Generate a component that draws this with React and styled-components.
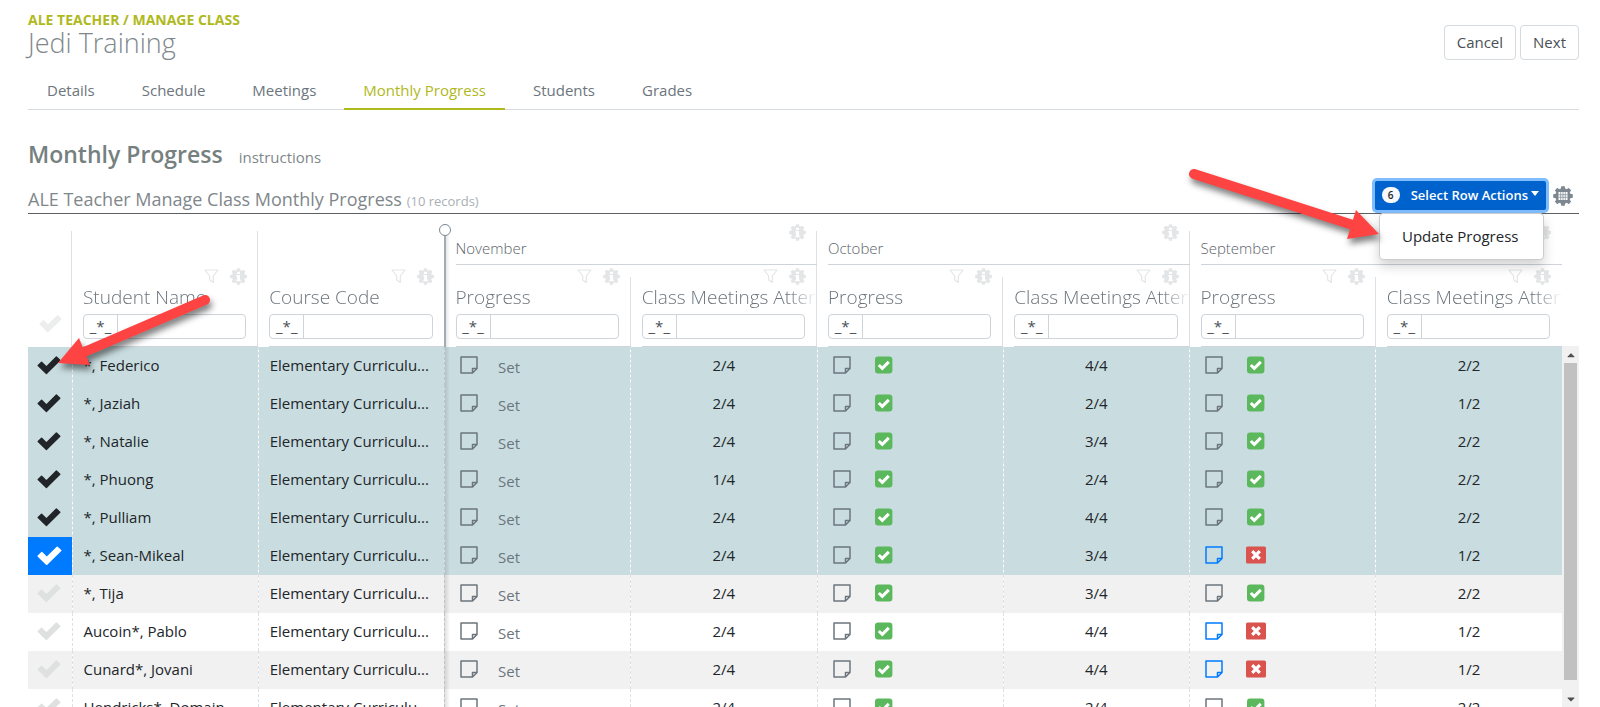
import styled, { createGlobalStyle } from 'styled-components';
import { FaCaretDown, FaCaretUp } from 'react-icons/fa';

const GlobalStyle = createGlobalStyle`
    * {
        box-sizing: border-box;
    }
    body {
        margin: 0;
        background-color: white;
        color: #212529;
        font-family: "Open Sans", "Noto Sans", sans-serif;
        font-size: 15px;
    }
    button, input {
        font-family: inherit;
    }
`;

const Container = styled.div`
    position: relative;
    display: flex;
    flex-direction: column;
    height: 100vh;
    padding: 10px 21px 0px 28px;
    overflow: hidden;
`;

const Header = styled.header`
    display: flex;
    align-items: flex-start;
    justify-content: space-between;
    height: 60px;
`;

const Breadcrumb = styled.div`
    font-size: 14px;
    font-weight: 700;
    line-height: 20px;
    color: #b0b91c;
`;

const ClassName = styled.h1`
    margin: 0px;
    font-size: 27px;
    font-weight: 300;
    line-height: 26px;
    color: #80878b;
`;

const HeaderButtons = styled.div`
    display: flex;
    gap: 4px;
    padding-top: 15px;
`;

const Button = styled.button`
    height: 35px;
    padding: 0px 12px 2px;
    border: 1px solid #d5dade;
    border-radius: 4px;
    background-color: white;
    font-size: 15px;
    color: #4a5056;
    cursor: pointer;
`;

const Tabs = styled.nav`
    display: flex;
    gap: 9px;
    border-bottom: 1px solid #d5dade;
`;

const Tab = styled.a`
    height: 40px;
    padding: 0px 19px;
    margin-bottom: -1px;
    border-bottom: 2px solid ${props => props.$active ? "#b0b91c" : "transparent"};
    font-size: 15px;
    line-height: 40px;
    color: ${props => props.$active ? "#b0b91c" : "#6c757d"};
    text-decoration: none;
`;

const Section = styled.div`
    display: flex;
    align-items: baseline;
    gap: 16px;
    padding-top: 28px;
`;

const SectionTitle = styled.h2`
    margin: 0px;
    font-size: 23px;
    font-weight: 600;
    line-height: 32px;
    color: #75807f;
`;

const Instructions = styled.a`
    font-size: 15px;
    color: #80878b;
    text-decoration: none;
`;

const GridBar = styled.div`
    display: flex;
    align-items: flex-end;
    justify-content: space-between;
    height: 44px;
    border-bottom: 1px solid #5c6064;
`;

const GridTitle = styled.h3`
    margin: 0px;
    font-size: 18px;
    font-weight: 400;
    line-height: 24px;
    color: #80878b;
`;

const Records = styled.small`
    font-size: 13px;
    color: #a9afb4;
`;

const Actions = styled.div`
    position: relative;
    display: flex;
    align-items: center;
    gap: 7px;
    padding: 0px 6px 3px 0px;
`;

const ActionButton = styled.button`
    display: flex;
    align-items: center;
    height: 29px;
    padding: 0px 7px 1px;
    border: none;
    border-radius: 2px;
    background-color: #0062cc;
    box-shadow: 0px 0px 0px 3px #80bdff;
    font-size: 13px;
    font-weight: 600;
    color: white;
    cursor: pointer;
`;

const Badge = styled.span`
    width: 18px;
    margin-right: 11px;
    border-radius: 8px;
    background-color: #f8f9fa;
    font-size: 10px;
    line-height: 16px;
    color: #212529;
    text-align: center;
`;

const Caret = styled.span`
    margin: -3px 0px 0px 3px;
    border-top: 5px solid white;
    border-left: 4px solid transparent;
    border-right: 4px solid transparent;
`;

const Menu = styled.div`
    position: absolute;
    top: 32px;
    right: 35px;
    z-index: 2;
    width: 165px;
    padding: 6px 0px 7px;
    border: 1px solid #cccccc;
    border-radius: 4px;
    background-color: white;
    box-shadow: 0px 6px 12px rgba(0, 0, 0, 0.18);
`;

const MenuItem = styled.button`
    width: 100%;
    padding: 0px 22px;
    border: none;
    background-color: transparent;
    font-size: 15px;
    line-height: 32px;
    color: #212529;
    text-align: left;
    white-space: nowrap;
`;

const Grid = styled.div`
    position: relative;
    display: flex;
    flex: 1;
    min-height: 0px;
`;

const TableArea = styled.div`
    position: relative;
    flex: 1;
    min-width: 0px;
    overflow: hidden;
`;

const Table = styled.table`
    width: 100%;
    border-collapse: collapse;
    table-layout: fixed;
`;

const Th = styled.th`
    padding: 0px;
    font-weight: 400;
    text-align: left;
    vertical-align: bottom;
`;

const HeadBox = styled.div`
    display: flex;
    flex-direction: column;
    justify-content: flex-end;
    height: ${props => props.$height}px;
    padding-left: 11px;
    background: linear-gradient(#dde1e5, #dde1e5) right bottom / 1px ${props => props.$line}px no-repeat;
`;

const HeadContent = styled.div`
    padding-bottom: 7px;
    border-bottom: 1px solid #ced4da;
`;

const Tools = styled.div`
    display: flex;
    justify-content: flex-end;
    align-items: center;
    gap: 11px;
    height: 18px;
    padding-right: 11px;
`;

const GroupContent = styled.div`
    height: 42px;
    border-bottom: 1px solid #ced4da;
`;

const GroupTitle = styled.div`
    font-size: 15px;
    font-weight: 300;
    line-height: 14px;
    color: #5c646b;
`;

const ColTitle = styled.div`
    height: 24px;
    margin-bottom: 5px;
    overflow: hidden;
    font-size: 19px;
    font-weight: 300;
    line-height: 24px;
    color: #6c757d;
    white-space: nowrap;
    mask-image: linear-gradient(to left, transparent 0px, black 28px);
`;

const Filter = styled.div`
    display: flex;
    height: 25px;
    margin-right: 12px;
    border: 1px solid #ced4da;
    border-radius: 4px;
`;

const FilterMode = styled.button`
    flex: none;
    width: 34px;
    padding: 0px;
    border: none;
    border-right: 1px solid #ced4da;
    background-color: transparent;
    font-size: 15px;
    line-height: 23px;
    color: #495057;
`;

const FilterInput = styled.input`
    flex: 1;
    min-width: 0px;
    border: none;
    background-color: transparent;
    outline: none;
`;

const HeadCheck = styled.div`
    padding: 0px 0px 12px;
    line-height: 0;
    color: #eceded;
`;

const Row = styled.tr`
    height: 38px;
    background-color: ${props => props.$selected ? "#c9dde0" : props.$odd ? "#f1f1f1" : "white"};
`;

const Td = styled.td`
    padding: 0px 11px 2px;
    border-right: 1px dashed #dde1e5;
    overflow: hidden;
    font-size: 15px;
    text-align: ${props => props.$center ? "center" : "left"};
    text-overflow: ellipsis;
    white-space: nowrap;

    &:last-child {
        border-right: none;
    }
`;

const CheckCell = styled(Td)`
    padding: 0px 0px 2px 9px;
    background-color: ${props => props.$current ? "#007bff" : "transparent"};
    line-height: 0;
    color: ${props => props.$current ? "white" : props.$selected ? "#212529" : "#dfe1e1"};
`;

const Progress = styled.div`
    display: flex;
    align-items: center;
    gap: ${props => props.$wide ? "23px" : "20px"};
    padding-left: 4px;
`;

const SetLink = styled.span`
    padding-top: 3px;
    color: #6c757d;
`;

const Splitter = styled.div`
    position: absolute;
    top: 10px;
    bottom: 0px;
    left: calc(44px + (100% - 44px) / 4 - 1px);
    width: 6px;
    background: linear-gradient(to right, rgba(0, 0, 0, 0.14), rgba(0, 0, 0, 0));
`;

const SplitterLine = styled.div`
    width: 2px;
    height: 123px;
    background-color: #a3acb5;
`;

const SplitterKnob = styled.div`
    position: absolute;
    top: 0px;
    left: -5px;
    width: 12px;
    height: 12px;
    border: 1px solid #7d8994;
    border-radius: 50%;
    background-color: white;
`;

const ScrollBar = styled.div`
    display: flex;
    flex-direction: column;
    align-items: center;
    flex: none;
    width: 17px;
    margin-top: 132px;
    background-color: #f1f1f1;
    font-size: 12px;
    color: #505050;
`;

const ScrollArrow = styled.div`
    display: flex;
    align-items: center;
    height: 17px;
`;

const Thumb = styled.div`
    flex: 1;
    width: 13px;
    margin-bottom: 10px;
    background-color: #c1c1c1;
`;

const Arrow = styled.svg`
    position: absolute;
    top: ${props => props.$top}px;
    left: ${props => props.$left};
    z-index: 3;
    filter: drop-shadow(2px 5px 3px rgba(0, 0, 0, 0.5));
    pointer-events: none;
`;

const teeth = [0, 45, 90, 135, 180, 225, 270, 315];

const GearShape = () => (
    <>
        <circle cx="10" cy="10" r="7.8"/>
        {teeth.map((deg) => (
            <rect key={deg} x="8" y="0.2" width="4" height="5" rx="0.8" transform={`rotate(${deg} 10 10)`}/>
        ))}
    </>
)

const InfoGear = () => (
    <svg width="17" height="17" viewBox="0 0 20 20" fill="#e3e5e7">
        <GearShape/>
        <path d="M8.200 4.500h3.600v2.600H8.200zM7.400 8.200h4.400v5.600h1v1.800H7.400v-1.800h1v-3.800h-1z" fill="white"/>
    </svg>
)

const GridGear = () => (
    <svg width="20" height="20" viewBox="0 0 20 20" fill="#7d8790">
        <GearShape/>
        <path d="M5.500 6h9v8h-9z" fill="white"/>
        <path d="M7.700 6v8M10 6v8M12.300 6v8M5.500 8.700h9M5.500 11.300h9" stroke="#7d8790" strokeWidth="0.7"/>
    </svg>
)

const FilterIcon = () => (
    <svg width="15" height="15" viewBox="0 0 15 15" fill="none" stroke="#e3e5e7" strokeWidth="1.2" strokeLinejoin="round">
        <path d="M1 1h13L9.300 7v6.500l-3.600-2.500V7z"/>
    </svg>
)

const CheckIcon = ({ size }) => (
    <svg width={size} height={size} viewBox="0 0 24 24" fill="currentColor" stroke="currentColor" strokeWidth="1.400" strokeLinejoin="round">
        <path d="M1.200 12.600L4.600 9.200L9.400 13.900L19.400 4L22.800 7.300L9.400 20.500Z"/>
    </svg>
)

const NoteIcon = ({ color }) => (
    <svg width="18" height="18" viewBox="0 0 18 18" fill="none" stroke={color} strokeWidth="1.500" strokeLinejoin="round">
        <path d="M1 1H17V12.500L12.500 17H1ZM12.500 17V12.500H17"/>
    </svg>
)

const PassedIcon = () => (
    <svg width="20" height="18" viewBox="0 0 20 18">
        <rect x="1" y="0.500" width="17.400" height="17" rx="3" fill="#5cb85c"/>
        <path d="M4.800 9L8.300 12.400L14.800 5.900" fill="none" stroke="white" strokeWidth="3"/>
    </svg>
)

const FailedIcon = () => (
    <svg width="20" height="18" viewBox="0 0 20 18">
        <rect x="0" y="0.500" width="20" height="17" rx="1.600" fill="#d9534f"/>
        <path d="M6.200 5.200L13.800 12.800M13.800 5.200L6.200 12.800" stroke="white" strokeWidth="3.200"/>
    </svg>
)

const ColumnHead = ({ title, height, line }) => (
    <HeadBox $height={height} $line={line}>
        <HeadContent>
            <Tools>
                <FilterIcon/>
                <InfoGear/>
            </Tools>
            <ColTitle>{title}</ColTitle>
            <Filter>
                <FilterMode type="button">_*_</FilterMode>
                <FilterInput type="text" aria-label={`Filter ${title}`}/>
            </Filter>
        </HeadContent>
    </HeadBox>
)

const Status = ({ value, note }) => (
    <Progress $wide={value !== "set"}>
        <NoteIcon color={note ? "#007bff" : "#6c757d"}/>
        {value === "set" && <SetLink>Set</SetLink>}
        {value === "yes" && <PassedIcon/>}
        {value === "no" && <FailedIcon/>}
    </Progress>
)

const tabs = ["Details", "Schedule", "Meetings", "Monthly Progress", "Students", "Grades"];

const months = ["November", "October", "September"];

const students = [
    { name: "*, Federico", attended: ["2/4", "4/4", "2/2"], passed: true, selected: true },
    { name: "*, Jaziah", attended: ["2/4", "2/4", "1/2"], passed: true, selected: true },
    { name: "*, Natalie", attended: ["2/4", "3/4", "2/2"], passed: true, selected: true },
    { name: "*, Phuong", attended: ["1/4", "2/4", "2/2"], passed: true, selected: true },
    { name: "*, Pulliam", attended: ["2/4", "4/4", "2/2"], passed: true, selected: true },
    { name: "*, Sean-Mikeal", attended: ["2/4", "3/4", "1/2"], passed: false, selected: true, current: true },
    { name: "*, Tija", attended: ["2/4", "3/4", "2/2"], passed: true },
    { name: "Aucoin*, Pablo", attended: ["2/4", "4/4", "1/2"], passed: false },
    { name: "Cunard*, Jovani", attended: ["2/4", "4/4", "1/2"], passed: false },
    { name: "Hendricks*, Domain", attended: ["2/4", "2/4", "2/2"], passed: true },
];

const App = () => {
  return (
    <Container>
        <GlobalStyle/>
        <Header>
            <div>
                <Breadcrumb>ALE TEACHER / MANAGE CLASS</Breadcrumb>
                <ClassName>Jedi Training</ClassName>
            </div>
            <HeaderButtons>
                <Button>Cancel</Button>
                <Button>Next</Button>
            </HeaderButtons>
        </Header>
        <Tabs>
            {tabs.map((tab) => (
                <Tab key={tab} href="#" $active={tab === "Monthly Progress"}>{tab}</Tab>
            ))}
        </Tabs>
        <Section>
            <SectionTitle>Monthly Progress</SectionTitle>
            <Instructions href="#">instructions</Instructions>
        </Section>
        <GridBar>
            <GridTitle>ALE Teacher Manage Class Monthly Progress <Records>(10 records)</Records></GridTitle>
            <Actions>
                <ActionButton>
                    <Badge>6</Badge>
                    Select Row Actions
                    <Caret/>
                </ActionButton>
                <GridGear/>
                <Menu>
                    <MenuItem>Update Progress</MenuItem>
                </Menu>
            </Actions>
        </GridBar>
        <Grid>
            <TableArea>
                <Table>
                    <colgroup>
                        <col width="44"/>
                        <col/><col/><col/><col/><col/><col/><col/><col/>
                    </colgroup>
                    <thead>
                        <tr>
                            <Th rowSpan={2}>
                                <HeadBox $height={133} $line={116}>
                                    <HeadCheck><CheckIcon size={23}/></HeadCheck>
                                </HeadBox>
                            </Th>
                            <Th rowSpan={2}><ColumnHead title="Student Name" height={133} line={116}/></Th>
                            <Th rowSpan={2}><ColumnHead title="Course Code" height={133} line={0}/></Th>
                            {months.map((month, i) => (
                                <Th key={month} colSpan={2}>
                                    <HeadBox $height={51} $line={i < 2 ? 34 : 0}>
                                        <GroupContent>
                                            <Tools><InfoGear/></Tools>
                                            <GroupTitle>{month}</GroupTitle>
                                        </GroupContent>
                                    </HeadBox>
                                </Th>
                            ))}
                        </tr>
                        <tr>
                            {months.map((month, i) => [
                                <Th key={month + "p"}><ColumnHead title="Progress" height={82} line={70}/></Th>,
                                <Th key={month + "c"}><ColumnHead title="Class Meetings Atten" height={82} line={i < 2 ? 82 : 0}/></Th>,
                            ])}
                        </tr>
                    </thead>
                    <tbody>
                        {students.map((s, i) => (
                            <Row key={s.name} $selected={s.selected} $odd={i % 2 === 0}>
                                <CheckCell $selected={s.selected} $current={s.current}><CheckIcon size={s.current ? 25 : 24}/></CheckCell>
                                <Td>{s.name}</Td>
                                <Td>Elementary Curriculu...</Td>
                                <Td><Status value="set"/></Td>
                                <Td $center>{s.attended[0]}</Td>
                                <Td><Status value="yes"/></Td>
                                <Td $center>{s.attended[1]}</Td>
                                <Td><Status value={s.passed ? "yes" : "no"} note={!s.passed}/></Td>
                                <Td $center>{s.attended[2]}</Td>
                            </Row>
                        ))}
                    </tbody>
                </Table>
                <Splitter>
                    <SplitterLine/>
                    <SplitterKnob/>
                </Splitter>
            </TableArea>
            <ScrollBar>
                <ScrollArrow><FaCaretUp/></ScrollArrow>
                <Thumb/>
                <ScrollArrow><FaCaretDown/></ScrollArrow>
            </ScrollBar>
        </Grid>
        <Arrow $top={160} $left="calc(100% - 420px)" width="210" height="90">
            <path d="M14 14L176 66" stroke="#fe4343" strokeWidth="10" strokeLinecap="round"/>
            <path d="M176 50L199 74L167 79z" fill="#fe4343"/>
        </Arrow>
        <Arrow $top={290} $left="50px" width="170" height="90">
            <path d="M155 10L32 63" stroke="#fe4343" strokeWidth="10" strokeLinecap="round"/>
            <path d="M8 73L29 48L40 75z" fill="#fe4343"/>
        </Arrow>
    </Container>
  )
}

export default App
